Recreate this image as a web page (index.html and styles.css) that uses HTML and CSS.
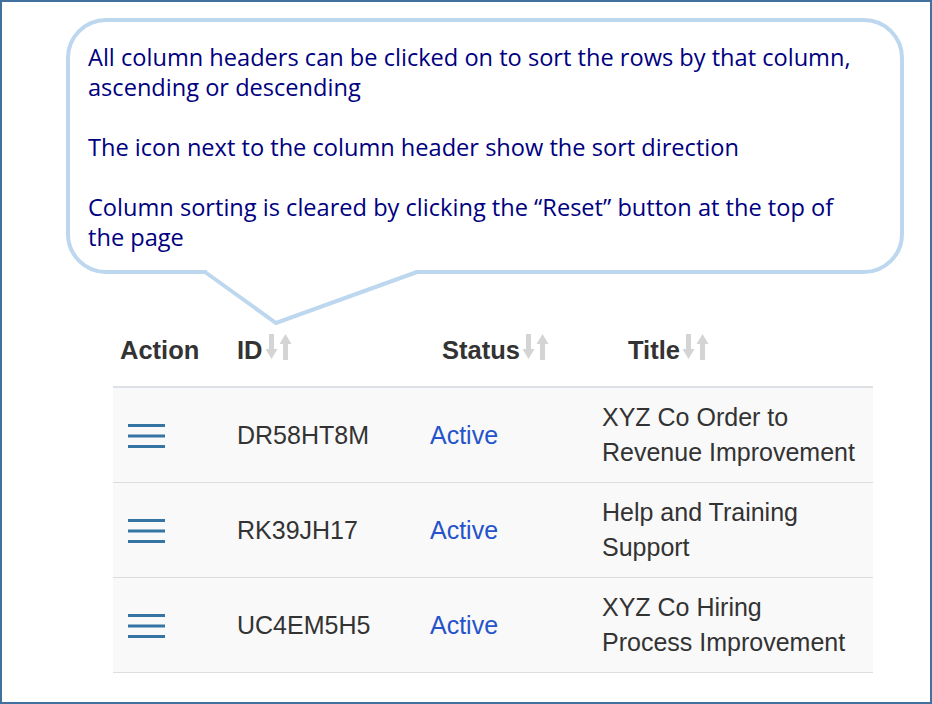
FILE: index.html
```html
<!DOCTYPE html>
<html lang="en">
<head>
    <meta charset="UTF-8">
    <meta name="viewport" content="width=device-width, initial-scale=1.0">
    <title>Column Sorting Help</title>
    <link rel="stylesheet" href="styles.css">
</head>
<body>
    <div class="frame">
        <div class="callout">
            <p>All column headers can be clicked on to sort the rows by that column,<br>ascending or descending</p>
            <p>The icon next to the column header show the sort direction</p>
            <p>Column sorting is cleared by clicking the &ldquo;Reset&rdquo; button at the top of<br>the page</p>
            <svg class="callout-tail" width="225" height="70" viewBox="0 0 225 70">
                <polygon points="7,6 7,11 76,61 215,11 215,6" fill="#fff"/>
                <polyline points="5,10 76,61 217,10" fill="none" stroke="#bdd7ee" stroke-width="4"/>
            </svg>
        </div>

        <table class="grid">
            <colgroup>
                <col style="width: 117px">
                <col style="width: 193px">
                <col style="width: 172px">
                <col style="width: 278px">
            </colgroup>
            <thead>
                <tr>
                    <th>Action</th>
                    <th>ID<svg class="sort-icon" width="26" height="26" viewBox="0 0 26 26"><rect x="3" y="0" width="5" height="17"/><polygon points="-0.5,15 11.5,15 5.5,25"/><rect x="17" y="9" width="5" height="17"/><polygon points="13.5,10 25.5,10 19.5,0"/></svg></th>
                    <th class="th-status">Status<svg class="sort-icon" width="26" height="26" viewBox="0 0 26 26"><rect x="3" y="0" width="5" height="17"/><polygon points="-0.5,15 11.5,15 5.5,25"/><rect x="17" y="9" width="5" height="17"/><polygon points="13.5,10 25.5,10 19.5,0"/></svg></th>
                    <th class="th-title">Title<svg class="sort-icon" width="26" height="26" viewBox="0 0 26 26"><rect x="3" y="0" width="5" height="17"/><polygon points="-0.5,15 11.5,15 5.5,25"/><rect x="17" y="9" width="5" height="17"/><polygon points="13.5,10 25.5,10 19.5,0"/></svg></th>
                </tr>
            </thead>
            <tbody>
                <tr>
                    <td class="action"><svg class="menu-icon" width="37" height="24" viewBox="0 0 37 24"><rect x="0" y="0" width="37" height="3"/><rect x="0" y="10.5" width="37" height="3"/><rect x="0" y="21" width="37" height="3"/></svg></td>
                    <td>DR58HT8M</td>
                    <td><a href="#" class="status">Active</a></td>
                    <td>XYZ Co Order to<br>Revenue Improvement</td>
                </tr>
                <tr>
                    <td class="action"><svg class="menu-icon" width="37" height="24" viewBox="0 0 37 24"><rect x="0" y="0" width="37" height="3"/><rect x="0" y="10.5" width="37" height="3"/><rect x="0" y="21" width="37" height="3"/></svg></td>
                    <td>RK39JH17</td>
                    <td><a href="#" class="status">Active</a></td>
                    <td>Help and Training<br>Support</td>
                </tr>
                <tr>
                    <td class="action"><svg class="menu-icon" width="37" height="24" viewBox="0 0 37 24"><rect x="0" y="0" width="37" height="3"/><rect x="0" y="10.5" width="37" height="3"/><rect x="0" y="21" width="37" height="3"/></svg></td>
                    <td>UC4EM5H5</td>
                    <td><a href="#" class="status">Active</a></td>
                    <td>XYZ Co Hiring<br>Process Improvement</td>
                </tr>
            </tbody>
        </table>
    </div>
</body>
</html>
```

FILE: styles.css
```css
body {
    margin: 0;
    padding: 0;
    background-color: #fff;
    font-family: "Liberation Sans", Arial, sans-serif;
}
.frame {
    width: 932px;
    height: 704px;
    box-sizing: border-box;
    border: 2px solid #41719c;
    overflow: hidden;
}
.callout {
    position: relative;
    width: 838px;
    height: 256px;
    box-sizing: border-box;
    margin: 16px 0 0 64px;
    padding: 20px 18px;
    border: 4px solid #bdd7ee;
    border-radius: 40px;
    font-family: "Open Sans", "Noto Sans", sans-serif;
    font-size: 23.6px;
    line-height: 30px;
    color: #000080;
}
.callout p {
    margin: 0 0 30px 0;
    white-space: nowrap;
}
.callout-tail {
    position: absolute;
    left: 130px;
    top: 240px;
}
.grid {
    margin: 45px 0 0 111px;
    width: 760px;
    table-layout: fixed;
    border-collapse: collapse;
    font-size: 25px;
    line-height: 35px;
    color: #333;
}
.grid th {
    text-align: left;
    font-weight: bold;
    font-size: 25.5px;
    padding: 14px 7px 18px 7px;
    border-bottom: 2px solid #dde1e5;
    white-space: nowrap;
}
.grid th.th-status {
    padding-left: 19px;
}
.grid th.th-title {
    padding-left: 33px;
}
.sort-icon {
    fill: #d4d4d4;
    margin-left: 3px;
    vertical-align: -1px;
}
.grid td {
    background-color: #f9f9f9;
    padding: 12px 7px;
    border-bottom: 1px solid #ddd;
    vertical-align: middle;
}
.grid td.action {
    padding-left: 15px;
}
.menu-icon {
    display: block;
    fill: #3674a4;
    margin-top: 2px;
}
.status {
    color: #2553c9;
    text-decoration: none;
}
```
